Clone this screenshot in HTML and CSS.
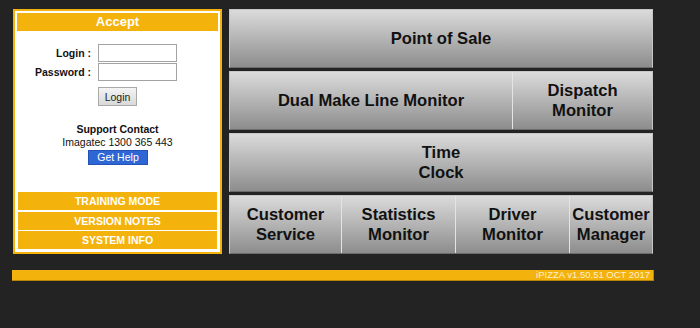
FILE: index.html
```html
<!DOCTYPE html>
<html lang="en">
<head>
  <meta charset="UTF-8" />
  <meta name="viewport" content="width=device-width, initial-scale=1.0"/>
  <title>iPIZZA Launcher</title>
  <link rel="stylesheet" href="styles.css">
</head>
<body>

<div class="page">
  <div class="main">

    <!-- Login Panel -->
    <div class="panel">
      <div class="panel-title">Accept</div>

      <form class="login">
        <label for="loginInput">Login :</label>
        <input type="text" id="loginInput" />
        <label for="passwordInput">Password :</label>
        <input type="password" id="passwordInput" />
        <span></span>
        <button type="button" class="btn-login">Login</button>
      </form>

      <div class="support">
        <div class="support-title">Support Contact</div>
        <div>Imagatec 1300 365 443</div>
        <button type="button" class="btn-help">Get Help</button>
      </div>

      <div class="menu">
        <div class="menu-item">TRAINING MODE</div>
        <div class="menu-item">VERSION NOTES</div>
        <div class="menu-item">SYSTEM INFO</div>
      </div>
    </div>

    <!-- Application Tiles -->
    <div class="tiles">
      <div class="tile-row">
        <div class="tile">Point of Sale</div>
      </div>
      <div class="tile-row row-two">
        <div class="tile">Dual Make Line Monitor</div>
        <div class="tile">Dispatch<br>Monitor</div>
      </div>
      <div class="tile-row">
        <div class="tile">Time<br>Clock</div>
      </div>
      <div class="tile-row row-four">
        <div class="tile">Customer<br>Service</div>
        <div class="tile">Statistics<br>Monitor</div>
        <div class="tile">Driver<br>Monitor</div>
        <div class="tile">Customer<br>Manager</div>
      </div>
    </div>

  </div>

  <div class="footer">iPIZZA v1.50.51 OCT 2017</div>
</div>

</body>
</html>
```

FILE: styles.css
```css
body {
  margin: 0;
  background: #232323;
  font-family: 'Liberation Sans', Arial, sans-serif;
  color: #111;
}

.page {
  padding: 9px 0 0 12px;
  width: 642px;
}

.main {
  display: flex;
  gap: 7px;
  height: 245px;
  margin-left: 1px;
}

/* Login Panel */
.panel {
  width: 201px;
  border: 2px solid #f4b20c;
  padding: 2px;
  background: #fff;
  display: flex;
  flex-direction: column;
}

.panel-title {
  height: 18px;
  line-height: 18px;
  background: #f4b20c;
  color: #fff;
  font-size: 13px;
  font-weight: bold;
  text-align: center;
}

.login {
  display: grid;
  grid-template-columns: 74px 79px;
  column-gap: 7px;
  row-gap: 1px;
  margin: 13px 0 0;
}

.login label {
  font-size: 10.5px;
  font-weight: bold;
  text-align: right;
  align-self: center;
}

.login input {
  width: 79px;
  height: 18px;
  box-sizing: border-box;
  border: 1px solid #a3a3a3;
  margin: 0;
  padding: 1px 3px;
  font-size: 10.5px;
}

.btn-login {
  justify-self: start;
  width: 39px;
  height: 19px;
  margin-top: 5px;
  padding: 0;
  border: 1px solid #a9a9a9;
  background: linear-gradient(#f4f4f4, #d9d9d9);
  font-family: inherit;
  font-size: 10.5px;
  color: #222;
}

.support {
  margin-top: 17px;
  text-align: center;
  font-size: 10.5px;
  line-height: 13px;
}

.support-title {
  font-weight: bold;
}

.btn-help {
  display: block;
  width: 60px;
  height: 15px;
  margin: 1px 0 0 71px;
  padding: 0;
  border: 1px solid #2353b5;
  background: #2f66d5;
  color: #fff;
  font-family: inherit;
  font-size: 10.5px;
  line-height: 13px;
}

.menu {
  margin-top: auto;
  padding-bottom: 1px;
  display: flex;
  flex-direction: column;
  gap: 1.3px;
}

.menu-item {
  height: 18px;
  line-height: 18px;
  margin: 0 1px;
  background: #f4b20c;
  color: #fff;
  font-size: 10.5px;
  font-weight: bold;
  text-align: center;
}

/* Tiles */
.tiles {
  width: 424px;
  display: flex;
  flex-direction: column;
  gap: 3px;
}

.tile-row {
  display: flex;
  height: 59px;
  box-sizing: border-box;
  border: 1px solid #c6c6c6;
  border-bottom-color: #6c6c6c;
}

.tile {
  flex: 1;
  display: flex;
  align-items: center;
  justify-content: center;
  text-align: center;
  background: linear-gradient(#dbdbdb, #8d8d8d);
  font-size: 16.6px;
  font-weight: bold;
  line-height: 19.5px;
  color: #111;
}

.tile + .tile {
  border-left: 1px solid #e4e4e4;
}

.row-two .tile:first-child {
  flex: 0 0 282px;
}

.row-four .tile:nth-child(1) {
  flex: 0 0 111px;
}

.row-four .tile:nth-child(2),
.row-four .tile:nth-child(3) {
  flex: 0 0 113px;
}

/* Footer */
.footer {
  margin-top: 16px;
  height: 10px;
  line-height: 10px;
  background: #f4b20c;
  border-bottom: 1px solid #b88408;
  border-right: 1px solid #b88408;
  padding-right: 3px;
  text-align: right;
  color: #fdf0cc;
  font-size: 9.5px;
}
```
